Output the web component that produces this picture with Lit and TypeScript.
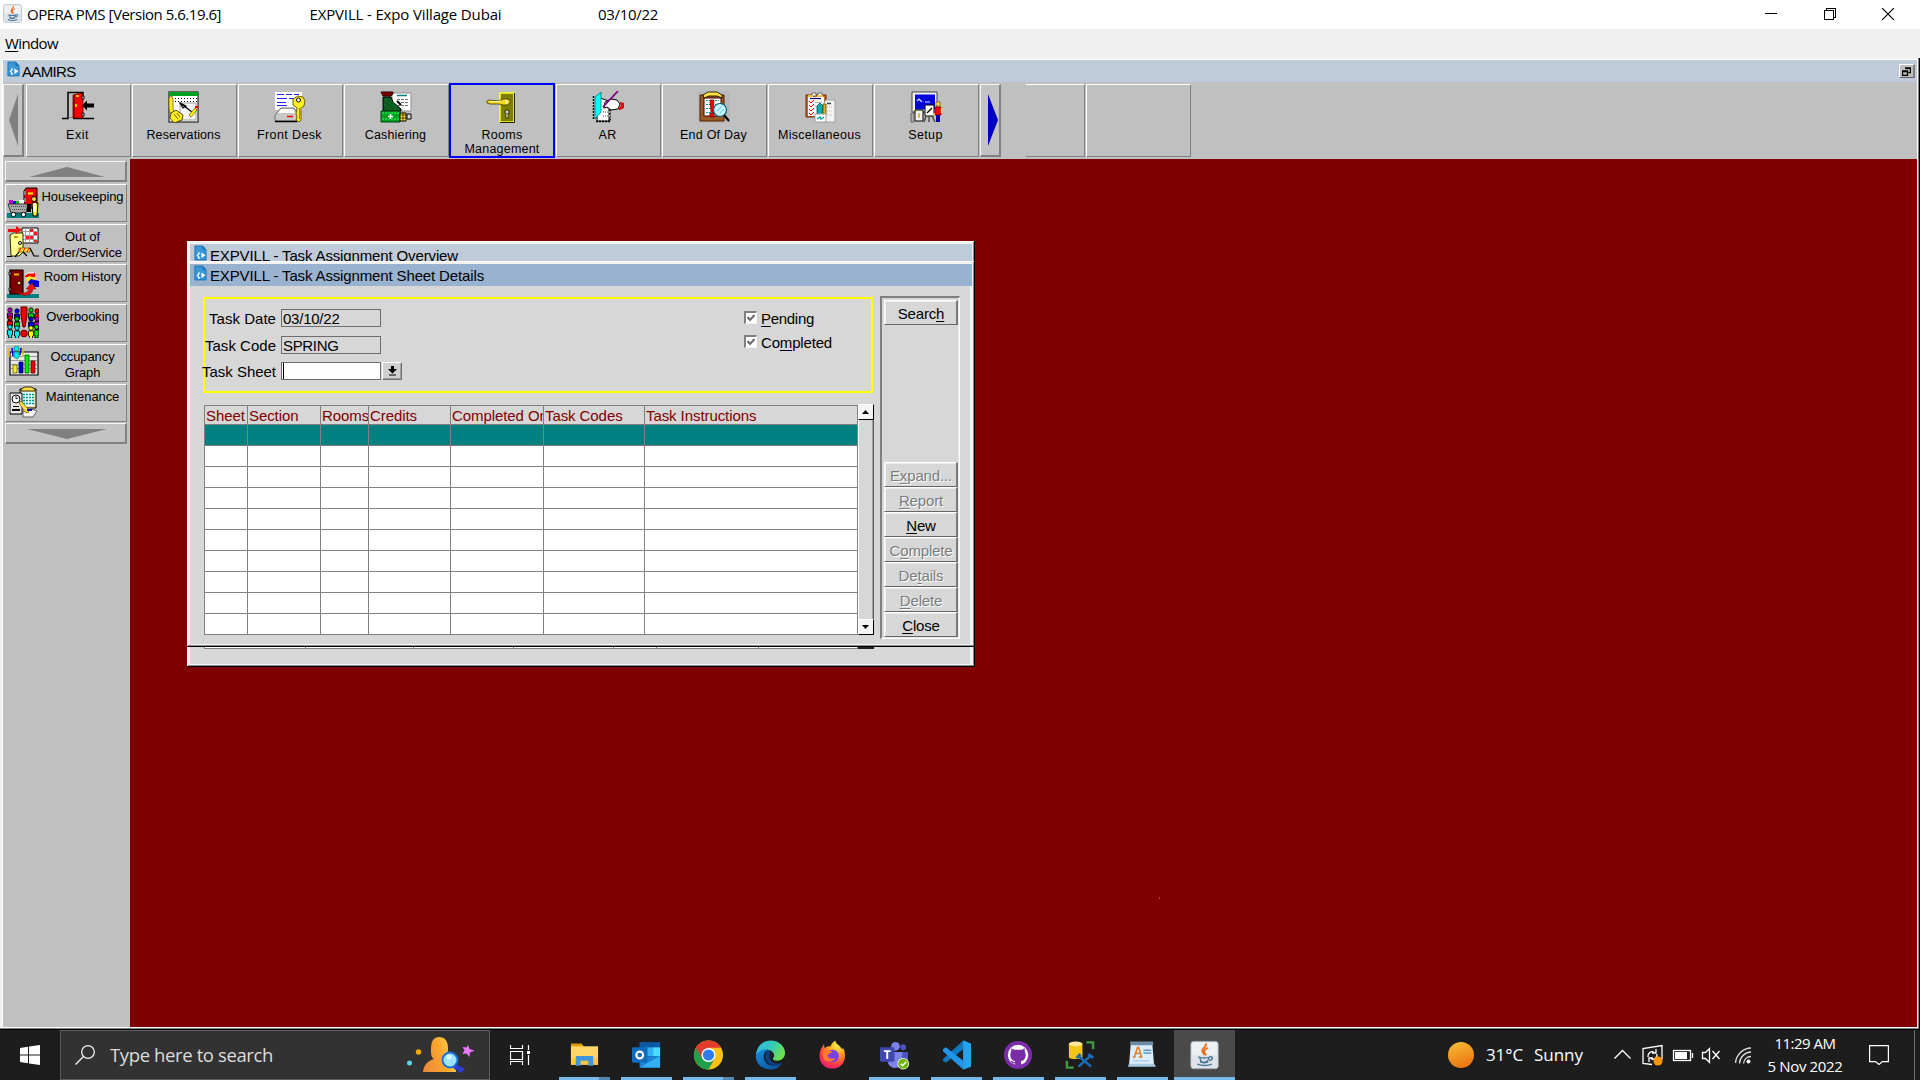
import { LitElement, html, css, svg, nothing } from "lit";
import { customElement, property } from "lit/decorators.js";

/* Spreads its text over a given width by adjusting the tracking. */
@customElement("fit-text")
class FitText extends LitElement {
  @property({ type: Number }) w = 0;
  static styles = css`
    :host { display: inline-block; white-space: nowrap; }
  `;
  render() {
    return html`<slot></slot>`;
  }
  firstUpdated() {
    const n = (this.textContent ?? "").trim().length;
    const now = this.getBoundingClientRect().width;
    if (this.w && n > 1) this.style.letterSpacing = `${(this.w - now) / n}px`;
  }
}

const icon = (w: number, h: number, body: unknown, crisp = false, vb = `0 0 ${w} ${h}`) => html`
  <svg width=${w} height=${h} viewBox=${vb} shape-rendering=${crisp ? "crispEdges" : "auto"} fill="none">${body}</svg>`;

const javaArt = svg`
  <rect x="1" y="1" width="30" height="30" rx="3" fill="#eef1f4" stroke="#9aa7b3"/>
  <rect x="2" y="16" width="28" height="14" fill="#dde3e8"/>
  <path d="M17 3c3 4-6 6-3 10l2 3M20 8c-5 2-6 5-2 8" stroke="#e76f1c" stroke-width="2"/>
  <path d="M9 18c4 1.500 10 1.500 13 0M11 18c0 4 1 6 4 6s6-2 6-6M22 18c4-1 3 4-1 4M8 26c5 2 12 2 16 0M11 23.500c3 1 7 1 9 0" stroke="#4d7896" stroke-width="1.700"/>`;

const docArt = svg`
  <path d="M1 1h8l4 4v11H1z" fill="#3c97d6" stroke="#1873b0"/>
  <path d="M9 0v5h4z" fill="#1873b0"/>
  <path d="M8 8l4.500 3L8 14z" fill="#fff"/>
  <path d="M6.500 8.500H5v1.500l-1.500 1L5 12.500v1.500h1.500" stroke="#fff" stroke-width="1.200"/>`;

const art: Record<string, unknown> = {
  exit: svg`
    <path d="M0 27.500h6V1.500h15V5M11 27.500h21" stroke="#000" stroke-width="1.500"/>
    <path d="M6 27h6v-2z" fill="#808080"/>
    <path d="M11 4l8-2 2 2v23H11z" fill="#f00" stroke="#600000" stroke-width=".8"/>
    <path d="M12 27V4" stroke="#800000" stroke-width="1.500"/>
    <path d="M14 5h3M13 14h1v2" stroke="#ff0" stroke-width="1.500"/>
    <path d="M20 5h2v3h-2zM20 22h2v3h-2z" fill="#fff" stroke="#000"/>
    <path d="M20 14.500l5-5v3h7v4h-7v3z" fill="#000"/>`,
  reservations: svg`
    <rect x="1" y="1" width="29" height="30" fill="#fff" stroke="#000"/>
    <rect x="1" y="1" width="29" height="4" fill="#00a020"/>
    <path d="M4 7.500h26M4 10.500h26" stroke="#000" stroke-width="1" stroke-dasharray="1 2"/>
    <path d="M12 12h16v17H12z" fill="#f4f4f4" stroke="#a0a0a0"/>
    <path d="M12 12l12 9M12 12l3 5 3-2z" stroke="#000" stroke-width="1.200"/>
    <path d="M21 24l6-7 2 2-6 7z" fill="#ff0" stroke="#806000" stroke-width=".8"/>
    <path d="M27 15h3v2h-3z" fill="#f00"/>
    <path d="M1 7l3-2 1 4v9l1 3-4 1-1-5z" fill="#ffee20" stroke="#806000" stroke-width=".8"/>
    <path d="M3 22l5-3 7 5-1 5-8 3-4-5z" fill="#ffee20" stroke="#302000" stroke-width=".8"/>
    <path d="M6 23l4 5M9 22l3 4" stroke="#806000"/>`,
  frontdesk: svg`
    <path d="M1 1h27v18H1z" fill="#fff"/>
    <path d="M3 3.500h7M12 3.500h6M20 3.500h5M3 7.500h10M15 7.500h5M3 11.500h9M3 14.500h10" stroke="#2020ff" stroke-width="1.200"/>
    <path d="M7 17h13l4 6v7H1v-6z" fill="#c8c8c8" stroke="#707070"/>
    <path d="M7 18h12l2 4H4z" fill="#fff"/>
    <path d="M1 30.500h22" stroke="#000" stroke-width="1.500"/>
    <path d="M13 25.500h6" stroke="#f00" stroke-width="1.500"/>
    <path d="M24 5l5 1 2 4-1 5-3 2v12l-2 2-3-2 1-3-1-3 1-6-4-3v-6z" fill="#ffee20" stroke="#706000"/>
    <circle cx="24.500" cy="9" r="2" fill="#fff" stroke="#000"/>
    <path d="M25.500 17v11" stroke="#a08000"/>`,
  cashiering: svg`
    <path d="M12 2h19v18H12z" fill="#fff" stroke="#909090"/>
    <path d="M17 4.500h10" stroke="#008080" stroke-width="1.500"/>
    <path d="M17 8.500h12M17 11.500h12M17 14.500h12" stroke="#777" stroke-dasharray="3 1"/>
    <path d="M1 1h12v2l-2 2H3z" fill="#800000" stroke="#300000"/>
    <path d="M3 6h8l2 5 8 7v2H3z" fill="#0a5a20" stroke="#000"/>
    <path d="M5 8l12 11M10 8l10 11M4 13l7 6" stroke="#2b8a3e" stroke-dasharray="1 1"/>
    <path d="M17 10l4 4" stroke="#000" stroke-width="2"/>
    <path d="M1 20h19v11H1z" fill="#00a020" stroke="#004010"/>
    <path d="M2 22h17M2 28h17" stroke="#30ff60" stroke-dasharray="2 1"/>
    <path d="M10.500 23v5M8 25.500h5" stroke="#fff" stroke-width="1.500"/>
    <path d="M20 22h6v8h-6z" fill="#ffee40" stroke="#000"/><path d="M27 23h4v5h-4z" fill="#d8d8d8" stroke="#000"/>
    <path d="M19 24h8M19 27h8M23 21v10" stroke="#504000"/>`,
  rooms: svg`
    <path d="M14 2h14v29H14z" fill="#808000" stroke="#ffff20" stroke-width="1.500"/>
    <path d="M28.500 2v29.500H14" stroke="#202000" stroke-width="1"/>
    <path d="M1 10l2-1 10 1 4-2h4l3 1v3l-3 2h-4l-4-1H4l-3-1z" fill="#f4d820" stroke="#403800" stroke-width=".8"/>
    <path d="M4 10.500h11" stroke="#fff9a0"/>
    <path d="M19 9l2 1-1 3" stroke="#fff" stroke-width="1"/>
    <circle cx="21" cy="21" r="2.200" fill="#d0d0d0" stroke="#202000"/>
    <path d="M20 23v4h2v-4" fill="#fff" stroke="#202000" stroke-width=".8"/>`,
  ar: svg`
    <path d="M5 6l12 4v20H5z" fill="#fff" stroke="#000"/>
    <path d="M1.500 5v24M4 30.500h14V17" stroke="#000" stroke-width="1.500" stroke-dasharray="2 1"/>
    <path d="M3 6l6-5v20l-6 7z" fill="#00ffff" stroke="#007070" stroke-width=".8"/>
    <path d="M11 17h7M11 21h7M11 25h7" stroke="#b0b0b0" stroke-dasharray="1 1" stroke-width="2"/>
    <path d="M13 11l6-3 6 1 3 4-2 5-7 1-4-3-3 1z" fill="#fff" stroke="#000"/>
    <path d="M28 11l4 1v5l-4 2-2-1 3-3z" fill="#e00000"/>
    <path d="M11 16L26 0" stroke="#800080" stroke-width="1.800"/>`,
  endofday: svg`
    <rect width="32" height="32" fill="#b8b8b8"/>
    <path d="M2 4h24v26H2z" fill="#9a5a28" stroke="#502000"/>
    <path d="M6 7h17v18H6z" fill="#fff" stroke="#400"/>
    <path d="M8 9.500h13M8 13.500h13M8 17.500h13M8 21.500h13" stroke="#00a0a0" stroke-dasharray="2 1"/>
    <path d="M5 4l5-3h9l5 3v3l-5-2h-8L6 7z" fill="#ffe040" stroke="#000" stroke-width=".8"/>
    <path d="M12 9h4l-1 12h-2zM12 22h4v4h-4z" fill="#f00" stroke="#800000" stroke-width=".8"/>
    <circle cx="22" cy="19" r="6.500" fill="#c8f4ff" stroke="#006080" stroke-width="1.200"/>
    <path d="M19 20l5-5M22 22l4-4" stroke="#40d0ff"/>
    <path d="M26 24l5 6" stroke="#000" stroke-width="2"/>`,
  misc: svg`
    <path d="M2 4h20v22H2z" fill="#c06a38" stroke="#702000"/>
    <path d="M4 6h16v19H4z" fill="#fff"/>
    <path d="M8 2h4v3H8zM14 2h4v3h-4z" fill="#fff" stroke="#505050" stroke-width=".8"/>
    <path d="M4 5h5M13 5h6" stroke="#ffe040" stroke-width="1.500"/>
    <path d="M6 7.500h11" stroke="#0000a0" stroke-width="1.200"/>
    <path d="M5 10l2 2 3-3M5 14l2 2 3-3M5 18l2 2 3-3M5 22l2 2 3-3" stroke="#f00"/>
    <path d="M11 11.500h7M11 15.500h4" stroke="#b0b0b0"/>
    <path d="M22 9h9v22H20V12z" fill="#f4f4f4" stroke="#a0a0a0"/>
    <path d="M23 12.500h4" stroke="#404040" stroke-width="1.500"/>
    <path d="M23 16h6M23 20h6M23 24h6" stroke="#bbb" stroke-dasharray="1 1"/>
    <path d="M13 15l3-3 3 3v9h-6z" fill="#00b0b0" stroke="#005050" stroke-width=".8"/>
    <path d="M19 13h3v11h-3z" fill="#e0b020" stroke="#604000" stroke-width=".8"/>
    <path d="M11 23h11v8H11z" fill="#fff" stroke="#a0a0a0"/>
    <path d="M13 28l3-2 1 2 3-2" stroke="#00a0a0" stroke-width="1.500"/>`,
  setup: svg`
    <path d="M2 1h25v20H2z" fill="#f4f4f4" stroke="#404040"/>
    <path d="M5 3.500h20v15H5z" fill="#0000e0"/>
    <path d="M7 10l2-2 3 3M15 11h5" stroke="#e0e0ff" stroke-width="1.200"/>
    <path d="M5 19h8v11H5z" fill="#f0f0f0" stroke="#000"/>
    <path d="M9 22v5" stroke="#d0b000" stroke-width="1.500"/>
    <path d="M1 22h3v9H1z" fill="#b0b0b0" stroke="#606060"/>
    <path d="M15 14h9v11h-9z" fill="#fff" stroke="#000"/>
    <path d="M17 22l5-5" stroke="#000" stroke-width="1.200"/>
    <path d="M16 25l-2 6M22 25l3 6M19 25v6" stroke="#505050" stroke-width="1.500"/>
    <path d="M26 11h4v4h-4z" fill="#ffe040" stroke="#806000" stroke-width=".8"/>
    <path d="M25 16h6v8h-6z" fill="#f00" stroke="#800000" stroke-width=".8"/>
    <path d="M26 24h4v7h-4z" fill="#0000a0"/>
    <path d="M24 22v3M31.500 17v5" stroke="#ffe040" stroke-width="1.500"/>`,
  housekeeping: svg`
    <path d="M0 27h32v5H0z" fill="#008080"/>
    <path d="M17 5l2-3h11v20H17z" fill="#f00000" stroke="#000"/>
    <path d="M21 7.500h5" stroke="#ff0" stroke-width="2"/>
    <path d="M17 6h1v3M17 13h1v3" stroke="#808080" stroke-width="2"/>
    <path d="M2 14h4v4H2z" fill="#c000c0"/><path d="M6 15h3v3H6z" fill="#00f"/><path d="M9 15h3v3H9z" fill="#0c0"/><path d="M12 14h5v4h-5z" fill="#fff"/>
    <path d="M1 18h20l-2 9H4z" fill="#a8a8a8" stroke="#303030"/>
    <path d="M4 20.500h15M5 23.500h13" stroke="#505050" stroke-dasharray="1 1"/>
    <circle cx="6.500" cy="28.500" r="2.200" fill="#fff" stroke="#000"/><circle cx="16.500" cy="28.500" r="2.200" fill="#fff" stroke="#000"/>
    <path d="M20 18h4v8h-4z" fill="#000"/>
    <circle cx="27" cy="13" r="2.500" fill="#ffe040" stroke="#000"/>
    <path d="M25 17h6l-1 13h-4z" fill="#ffee20" stroke="#000"/>
    <path d="M26.500 17h2.500v9h-2.500z" fill="#fff"/>`,
  outoforder: svg`
    <path d="M15 2h16v15H15z" fill="#fff" stroke="#000"/>
    <path d="M18.500 2v15M22.500 2v15M26.500 2v15M15 5.500h16M15 9.500h16M15 13.500h16" stroke="#a0a0a0"/>
    <path d="M23 3h3v3h-3zM27 6h3v3h-3zM19 10h3v3h-3zM23 10h3v3h-3zM27 14h3v2h-3z" fill="#f02020"/>
    <path d="M3 9l3-2h10v19l-4 4H4z" fill="#ffff90" stroke="#303000"/>
    <path d="M7 11h4" stroke="#c0a000" stroke-width="2"/><circle cx="13" cy="17" r="1.500" fill="#fff" stroke="#000"/>
    <path d="M1 3h8V0l6 4-6 4V6H1z" fill="#e81010"/>
    <path d="M12 22h11v4H12z" fill="#ffee40" stroke="#806000" stroke-width=".8"/>
    <path d="M14 22l-2 4M18 22l-2 4M22 22l-2 4" stroke="#f00"/>
    <path d="M12 26l-4 5M23 22l4 8h5M16 26l4 4M0 30.500h5" stroke="#000" stroke-width="1.200"/>`,
  history: svg`
    <path d="M0 28h32v4H0z" fill="#008080"/>
    <path d="M3 4h13v24H3z" fill="#800000" stroke="#000" stroke-width="1.200"/>
    <path d="M7 8.500h5" stroke="#e0c000" stroke-width="2"/><circle cx="12" cy="17" r="1.800" fill="#ffe040" stroke="#000" stroke-width=".8"/>
    <path d="M2 6h2v3H2zM2 22h2v3H2z" fill="#aaa" stroke="#000" stroke-width=".8"/>
    <path d="M17 10l4-3h7v4H18z" fill="#f00"/><path d="M17.500 10l3.500-3h6" stroke="#fff"/><path d="M19 13l3-3 7 2-1 4h-8z" fill="#ffe820"/><path d="M21 16l3-3 8 2v6h-8z" fill="#0000e0"/>
    <path d="M9 25c5 3 12 3 13-2h-3l6-6 4 6h-3c-1 8-12 8-17 2z" fill="#e01818" stroke="#800000" stroke-width=".5"/>`,
  overbooking: svg`
    ${[["#c000c0", 3, 4], ["#00f", 10, 5], ["#0c0", 24, 4], ["#e00", 30, 5], ["#e00", 3, 12], ["#0c0", 10, 13], ["#00f", 24, 13], ["#c000c0", 30, 13], ["#0ee", 3, 21], ["#0ee", 10, 22], ["#ff0", 24, 22], ["#0d0", 29.500, 21]].map(
      ([c, x, y]) => svg`<circle cx=${x} cy=${y} r="2.200" fill=${c} stroke="#000" stroke-width=".8"/>
        <path d=${`M${+x - 2.500} ${+y + 3}h5v5h-1v3h-3v-3h-1z`} fill=${c} stroke="#000" stroke-width=".8"/>`)}
    <path d="M14 1h6v9l-2 11h-2l-2-11z" fill="#e80000" stroke="#600000"/>
    <circle cx="17" cy="27.500" r="3.400" fill="#e80000" stroke="#600000"/>`,
  occupancy: svg`
    <path d="M3 6h28v23H3z" fill="#e8e8e8" stroke="#000" stroke-width="1.200"/>
    <path d="M4 10.500h26M4 14.500h26M4 18.500h26M4 22.500h26" stroke="#999"/>
    <path d="M6 19h4v8H6z" fill="#ffee20" stroke="#606000" stroke-width=".8"/><path d="M12 16h4v11h-4z" fill="#00c" stroke="#000060" stroke-width=".8"/>
    <path d="M18 9h4v18h-4z" fill="#0e0" stroke="#006000" stroke-width=".8"/><path d="M24 15h4v12h-4z" fill="#e00" stroke="#600000" stroke-width=".8"/>
    <path d="M2 2v9M16 2v9" stroke="#e0c000" stroke-width="1.500"/>
    <path d="M5 2l1 8M14 2l-1 7" stroke="#00c" stroke-width="1.500"/>
    <circle cx="9.500" cy="2.500" r="2.500" fill="#0ee" stroke="#007070" stroke-width=".7"/><path d="M7 6h5v5l-2 2-3-2z" fill="#0ee" stroke="#007070" stroke-width=".7"/>`,
  maintenance: svg`
    <path d="M13 3h16v19H13z" fill="#f0e0a0" stroke="#000"/>
    <path d="M15 6h12v14H15z" fill="#e8ffff"/>
    <path d="M16 8.500h11M16 11.500h11M16 14.500h11M16 17.500h11" stroke="#009090" stroke-dasharray="2 1" stroke-width="1.500"/>
    <path d="M14 3l4-2h6l4 2v2H14z" fill="#ffe040" stroke="#000" stroke-width=".8"/>
    <path d="M3 7h12v21H3z" fill="#e8e8e8" stroke="#000"/>
    <path d="M1.500 8h1.500v19H1.500z" fill="#909090"/>
    <circle cx="9" cy="13" r="4" fill="#fff" stroke="#000"/><path d="M9 10v3l2-1" stroke="#303030"/>
    <path d="M6 20.500h6" stroke="#000"/><path d="M5 24h8" stroke="#000" stroke-width="2"/>
    <path d="M16 26l6-4 8 3-4 6H16z" fill="#f4f4f4" stroke="#606060"/>
    <path d="M14 15l8 9-1 3-3-1-6-9z" fill="#ffe040" stroke="#806000" stroke-width=".8"/>
    <path d="M20 24h5" stroke="#0000d0" stroke-width="2"/>`,
};

const apps: { id: string; line?: boolean; active?: boolean; multi?: boolean; art: unknown }[] = [
  { id: "explorer", line: true, multi: true, art: svg`
      <path d="M2 3h11l3 4H2z" fill="#d99a0b"/><path d="M2 6h28v19H2z" fill="#ffd667"/><path d="M2 18h28v7H2z" fill="#fbc83f"/>
      <path d="M7 16h18v10h-5v-5h-8v5H7z" fill="#4296da"/>` },
  { id: "outlook", line: true, art: svg`
      <path d="M9 2h21v26H9z" fill="#1066b5"/><path d="M16 7h14v9H16z" fill="#32b1ee"/><path d="M23 7h7v9h-7z" fill="#50d9ff"/><path d="M9 2h21v5H9z" fill="#0c59a4"/>
      <path d="M9 17l21-1v12H9z" fill="#1b84d9"/><path d="M9 28l21-12v12z" fill="#35b0f0"/>
      <rect x="1" y="7" width="16" height="16" rx="1.500" fill="#0f6cbd"/><circle cx="9" cy="15" r="3.500" stroke="#fff" stroke-width="2.200"/>` },
  { id: "chrome", line: true, multi: true, art: svg`
      <circle cx="16" cy="15" r="15" fill="#fbc116"/>
      <path d="M3 7.500A15 15 0 0 0 16 30l6.500-11.300-6.500-3.700z" fill="#239e4b"/>
      <path d="M3 7.500A15 15 0 0 1 29 7.500H16v7.500l-6.500 3.700z" fill="#e33b2e"/>
      <circle cx="16" cy="15" r="7.300" fill="#fff"/><circle cx="16" cy="15" r="5.800" fill="#2f7de9"/>` },
  { id: "edge", line: true, art: svg`
      <defs><linearGradient id="eg" x1="0" y1="0" x2="1" y2=".4"><stop stop-color="#2fb6e8"/><stop offset=".6" stop-color="#35c9b5"/><stop offset="1" stop-color="#6ae04e"/></linearGradient>
      <linearGradient id="eb" x1="0" y1="0" x2="1" y2="1"><stop stop-color="#1490df"/><stop offset="1" stop-color="#0c4a96"/></linearGradient></defs>
      <path d="M1 15C2 5 9 0 16 0c9 0 15 6 15 13 0 5-4 8-8 8-3 0-5-1-4.500-2.500 3-3 .5-8.500-5-8.500C8 10 3 12 1 15z" fill="url(#eg)"/>
      <path d="M1 15c2-4 7-6 12-6-4 3-5 8-3 12 3 6 12 7 18 2-3 5-7 7-12 7C7 30 0 23 1 15z" fill="url(#eb)"/>
      <path d="M13 9c-5 6-2 17 8 17 3 0 5-1 7-3-6 2-12 0-13-5-.5-2 0-4 1-5z" fill="#0b3f86"/>` },
  { id: "firefox", art: svg`
      <defs><radialGradient id="ff" cx=".7" cy=".15" r=".95"><stop stop-color="#fff24a"/><stop offset=".4" stop-color="#ff9a1f"/><stop offset=".75" stop-color="#ff3b47"/><stop offset="1" stop-color="#e01a80"/></radialGradient></defs>
      <path d="M4 9l3-5 1 4c2-2 4-2 6-2 1-3 3-5 5-6 0 4 5 5 7 9 1-1 1-2 0-3 6 9 3 23-10 23C5 29 0 19 4 9z" fill="url(#ff)"/>
      <circle cx="16" cy="16" r="6.500" fill="#7a3ff0"/><path d="M6 11c4-2 6 0 10 0-2 3-5 2-5 5 1 3 5 3 8 2-2 5-11 5-13-1z" fill="#ff7a2a"/>` },
  { id: "teams", line: true, art: svg`
      <circle cx="25" cy="7" r="3" fill="#4b53bc"/><circle cx="17" cy="6" r="4.500" fill="#7b83eb"/>
      <path d="M20 12h10v8a5 5 0 0 1-8 4z" fill="#4b53bc"/><path d="M9 12h15v9a7.500 7.500 0 0 1-15 0z" fill="#7b83eb"/>
      <rect x="1" y="7" width="15" height="15" rx="1.500" fill="#4048b0"/><path d="M5 11h7M8.500 11v8" stroke="#fff" stroke-width="2"/>
      <circle cx="25" cy="24" r="6" fill="#fff"/><circle cx="25" cy="24" r="5.200" fill="#6bb700"/><path d="M22.500 24l2 2 3.500-4" stroke="#fff" stroke-width="1.600"/>` },
  { id: "code", line: true, art: svg`
      <path d="M23 0l8 3v24l-8 3z" fill="#24a5f1"/><path d="M23 0v9L5 23l-3-2v-2z" fill="#0f77bd"/><path d="M23 30v-9L5 7 2 9v2z" fill="#2196e8"/><path d="M23 0l3 1v28l-3 1z" fill="#2b9ee6"/>` },
  { id: "github", line: true, art: svg`
      <circle cx="15.500" cy="15" r="14.500" fill="#7a2da6"/><circle cx="15.500" cy="15" r="10.500" fill="#fff"/>
      <path d="M12.500 25.500v-4c-4-1-5-4-5-7 0-1 .5-2 1-3V8l3 1.500h8l3-1.500v3.500c.5 1 1 2 1 3 0 3-1 6-5 7v4z" fill="#7a2da6"/><path d="M12.500 23c-2 .5-3 0-4-2" stroke="#7a2da6" stroke-width="1.500"/>` },
  { id: "sqldev", line: true, art: svg`
      <path d="M4 3v14c0 3 14 3 14 0V3z" fill="#f5c518"/><ellipse cx="11" cy="3.500" rx="7" ry="2.500" fill="#ffe9a0"/>
      <path d="M22 2h7v7M2 21v7h7" stroke="#3f9b3f" stroke-width="2.500"/>
      <path d="M14 16l13 11M26 16L14 27" stroke="#1c6bb5" stroke-width="2.600"/><path d="M12 18l4-4M24 14l5 4" stroke="#1c6bb5" stroke-width="3"/>` },
  { id: "wordpad", line: true, art: svg`
      <path d="M4 2h22l2 24H2z" fill="#dceefb"/><path d="M3 1h24v4H4z" fill="#6d8ba5"/><path d="M2 24h26l2 3H1z" fill="#a9cbe6"/>
      <path d="M6 17h3M12 17h4M7.500 17l3.500-10h1l3 10M9 13.500h5" stroke="#e0832c" stroke-width="1.600"/><path d="M17 10h8M17 13h8" stroke="#5b96d2" stroke-width="1.500"/><path d="M6 21h17" stroke="#9fc2e0"/>` },
  { id: "java", line: true, active: true, art: svg`<g transform="translate(1 0) scale(.94)">${javaArt}</g>` },
];

const tools = [
  ["exit", "Exit", 23], ["reservations", "Reservations", 74], ["frontdesk", "Front Desk", 65], ["cashiering", "Cashiering", 61.500],
  ["rooms", "Rooms Management", 0], ["ar", "AR", 18], ["endofday", "End Of Day", 67], ["misc", "Miscellaneous", 83], ["setup", "Setup", 34.500],
] as const;

const side = [
  ["housekeeping", ["Housekeeping"]], ["outoforder", ["Out of", "Order/Service"]], ["history", ["Room History"]],
  ["overbooking", ["Overbooking"]], ["occupancy", ["Occupancy", "Graph"]], ["maintenance", ["Maintenance"]],
] as const;

const columns = ["Sheet", "Section", "Rooms", "Credits", "Completed On", "Task Codes", "Task Instructions"];

const actions = [
  ["E", "x", "pand...", true], ["", "R", "eport", true], ["", "N", "ew", false], ["C", "o", "mplete", true],
  ["De", "t", "ails", true], ["", "D", "elete", true], ["", "C", "lose", false],
] as const;

@customElement("app-root")
class AppRoot extends LitElement {
  static styles = css`
    :host { display: flex; flex-direction: column; width: 1920px; height: 1080px; overflow: hidden; background: #c0c0c0; color: #000;
      font: 15px/18px "Liberation Sans", Arial, sans-serif; }
    * { box-sizing: border-box; }
    svg { display: block; flex: none; }
    u { text-decoration: underline; text-underline-offset: 2px; text-decoration-thickness: 1px; }
    .ui { font-family: "Open Sans", "Noto Sans", sans-serif; }

    .titlebar { display: flex; align-items: center; height: 29px; background: #fff; padding: 0 0 2px 3px; flex: none; }
    .titlebar .name { margin-left: 5px; }
    .titlebar .hotel { margin-left: 88.5px; }
    .titlebar .date { margin-left: 96.5px; }
    .controls { display: flex; align-items: center; margin-left: auto; gap: 46.5px; padding-right: 26px; }
    .menubar { height: 29px; background: #f0f0f0; padding: 4px 0 0 5px; flex: none; line-height: 21px; }

    .mdi { height: 972px; flex: none; display: flex; flex-direction: column; padding: 2px 1px 1px 3px; background: #fff;
      border-right: 1px solid #000; border-bottom: 1px solid #000; box-shadow: inset -1px -1px #808080, inset 2px 1px #f0f0f0; }
    .caption { display: flex; align-items: flex-start; flex: none; height: 22px; background: #bfcbd9; }
    .mdi > .caption { margin-right: 1px; padding: 1px 2px 0 4px; }
    .mdi > .caption fit-text { margin: 2px 0 0 2px; }
    .restore { margin: 3px 0 0 auto; width: 16px; height: 14px; background: #c0c0c0; display: grid; place-items: center;
      border: 1px solid #fff; border-right: 2px solid #808080; border-bottom: 1px solid #606060; }

    .toolbar { flex: none; height: 77px; display: flex; gap: 1px; padding-top: 2px; background: #c0c0c0; margin-right: 1px; }
    .tool, .sidebtn { background: #c0c0c0; border: 1px solid #fff; border-right-color: #808080; border-bottom-color: #808080; }
    .tool { width: 105px; height: 73px; display: flex; flex-direction: column; align-items: center; padding: 6px 2px 0 0; gap: 5px;
      font-size: 12.5px; line-height: 14px; text-align: center; overflow: hidden; }
    .tool.on { border: 2px solid #00f; margin: -1px 0 0 -1px; width: 106px; height: 75px; padding: 6px 0 0 0; }
    .tool.on fit-text { display: block; }
    .tool.cut { width: 59px; margin-left: 24px; border-left: 0; }
    .arrow { background: #c3c3c3; border: 1px solid #f4f4f4; border-right: 2px solid #808080; border-bottom: 2px solid #808080; display: grid; place-items: center; }
    .toolbar .arrow { width: 21px; height: 73px; }
    .toolbar .prev { margin-right: 1px; }
    .toolbar .next svg { margin-left: 3px; }

    .work { flex: none; height: 868px; display: flex; margin-right: 1px; }
    .sidebar { width: 127px; background: #c0c0c0; padding: 2px 3px 0 2px; display: flex; flex-direction: column; gap: 2px; }
    .sidebar .arrow { height: 21px; padding-top: 2px; }
    .sidebar .arrow svg { margin-left: 3px; }
    .sidebar .last { margin-top: -1px; }
    .sidebtn { height: 38px; display: flex; align-items: flex-start; padding: 1px 0 0 1px; font-size: 13px; line-height: 16px; flex: none; overflow: visible; }
    .sidebtn div { flex: 1; text-align: center; padding: 3px 0 0 0; letter-spacing: -0.1px; white-space: nowrap; }

    .canvas { flex: 1; background: #800000; position: relative; }
    .speck { position: absolute; left: 1029px; top: 738px; width: 1px; height: 2px; background: #b04848; }
    .win { position: absolute; left: 57px; width: 788px; background: #f3f3f3; padding: 3px 2px 2px 3px; display: flex; flex-direction: column;
      border-right: 1px solid #000; border-bottom: 1px solid #000; box-shadow: inset 1px 1px #fff, inset -1px -1px #8a8a8a; }
    .win .caption { padding-left: 4px; background: #bfcbd9; }
    .win .caption svg { margin-top: 1px; }
    .win .caption fit-text { margin: 3px 0 0 3px; }
    .overview { top: 82px; height: 426px; }
    .overview .body { align-items: flex-end; padding: 0 0 15px 14px; gap: 0; }
    .remnant { display: grid; grid-template-columns: 101px 108px 100px 100px 43px 102px 1fr; width: 654px; height: 6px; background: #fff;
      border: 1px solid #808080; }
    .remnant i { border-right: 1px solid #808080; }
    .foot { width: 16px; height: 6px; background: #202020; }
    .foot2 { width: 79px; height: 4px; margin: 0 0 3px 6px; border-bottom: 1px solid #fff; }
    .details { top: 102px; height: 386px; }
    .details .caption { background: #99b2d0; }
    .body { flex: 1; display: flex; background: #d7d7d7; margin-right: 2px; padding: 10px 0 0 13px; gap: 7px; }
    .main { width: 670px; display: flex; flex-direction: column; padding-top: 1px; }
    .group { height: 96px; border: 2px solid #ff0; display: flex; padding-top: 10px; flex: none; }
    .fields { display: grid; grid-template-columns: 71px 100px 20px; grid-template-rows: 18px 18px 18px; row-gap: 9px; width: 197px; }
    .fields .r3 { margin-top: -1px; }
    .fields label { display: flex; justify-content: flex-end; line-height: 20px; }
    .box { margin-left: 5px; width: 100px; height: 18px; border: 1px solid #6e6e6e; padding-left: 1px; line-height: 18px; }
    .box.edit { background: #fff; padding: 0 0 0 1px; }
    .caret { display: block; width: 1px; height: 16px; background: #000; }
    .lov { margin-left: 6px; width: 20px; height: 18px; background: #d0d0d0; border: 1px solid #fff; border-right: 1px solid #707070; border-bottom: 1px solid #707070;
      box-shadow: inset -1px -1px #a0a0a0; display: grid; place-items: center; }
    .checks { margin-left: 342px; padding-top: 2px; display: flex; flex-direction: column; gap: 11px; }
    .check { display: flex; height: 13px; gap: 4px; line-height: 15px; align-items: flex-start; }
    .tick { width: 13px; height: 13px; background: #fff; border: 2px solid #808080; border-right: 1px solid #f4f4f4; border-bottom: 1px solid #f4f4f4; }
    .gridwrap { margin-top: 11px; display: flex; height: 231px; padding-left: 1px; }
    .grid { margin-top: 1px; width: 654px; height: 230px; border: 1px solid #808080; display: grid; background: #fff; flex: none;
      grid-template-columns: 43px 73px 48px 82px 93px 101px 1fr; grid-template-rows: 19px repeat(9, 21px) 20px; }
    .cell { border-right: 1px solid #808080; border-bottom: 1px solid #808080; }
    .cell:nth-child(7n) { border-right: 0; }
    .cell:nth-child(n + 71) { border-bottom: 0; }
    .head { background: #d7d7d7; color: #800000; padding-left: 1px; overflow: hidden; white-space: nowrap; line-height: 20px; letter-spacing: -0.08px; }
    .sel { background: #008080; }
    .vscroll { width: 16px; height: 231px; display: flex; flex-direction: column; justify-content: space-between; background: #d7d7d7;
      border-left: 1px solid #fff; box-shadow: inset -1px 0 #606060, inset -2px 0 #a0a0a0; flex: none; }
    .vbtn { height: 16px; background: #f4f4f4; border: 1px solid #fff; border-right: 1px solid #000; border-bottom: 1px solid #000; display: grid; place-items: center; margin-left: -1px; padding-right: 1px; }
    .panel { width: 80px; height: 343px; border: 2px solid #808080; border-right: 1px solid #fff; border-bottom: 1px solid #fff; box-shadow: inset -1px -1px #e8e8e8;
      padding: 2px 1px 1px 2px; display: flex; flex-direction: column; justify-content: space-between; flex: none; }
    .btn { width: 74px; height: 25px; border: 1px solid #fff; border-right: 2px solid #7a7a7a; border-bottom: 1px solid #666; background: #d7d7d7;
      box-shadow: inset 1px 1px #ececec; text-align: center; line-height: 23px; letter-spacing: -0.15px; padding: 1px 0 0 1px; white-space: nowrap; }
    .btn.off { color: #7c7c7c; text-shadow: 1px 1px #fff; }

    .taskbar { flex: none; height: 50px; background: #1d1d1d; display: flex; color: #fff; }
    .start { width: 60px; display: grid; place-items: center; padding-right: 1px; }
    .search { width: 430px; height: 50px; background: #323232; border: 1px solid #5c5c5c; display: flex; align-items: center; padding-left: 14px; color: #dcdcdc; }
    .search fit-text { font-size: 18.5px; margin: 0 134px 0 15px; line-height: 24px; }
    .view { width: 64px; display: grid; place-items: center; padding-right: 4px; }
    .apps { display: flex; gap: 1px; }
    .app { width: 61px; height: 50px; display: flex; flex-direction: column; align-items: center; justify-content: space-between; padding-top: 10px; }
    .app > svg { margin-left: -1px; }
    .app.on { background: #4a4a4a; }
    .line { width: 51px; height: 3px; background: #76b9ed; }
    .line.multi { background: linear-gradient(90deg, #76b9ed 40px, #5588b0 40px); }
    .app.on .line { width: 61px; }
    .tray { margin-left: auto; display: flex; align-items: center; font-size: 17px; }
    .tray svg { margin-left: 31px; }
    .tray .cond { margin-left: 11px; }
    .sun { width: 26px; height: 26px; border-radius: 50%; background: linear-gradient(160deg, #f7c036, #ec6a0c); margin-right: 12px; }
    .clock { display: flex; flex-direction: column; align-items: center; width: 80px; margin: 0 24px 1px 13px; font-size: 15px; line-height: 23px; }
    .tray .note svg { margin-left: 0; }
    .peek { width: 1px; height: 50px; background: #6a6a6a; margin: 0 5px 0 25px; }
  `;

  private tri(points: string, color: string, w: number, h: number) {
    return icon(w, h, svg`<polygon points=${points} fill=${color}/>`);
  }

  render() {
    return html`
      <header class="titlebar ui">
        ${icon(19, 19, javaArt, false, "0 0 32 32")}
        <fit-text class="name" w="194">OPERA PMS [Version 5.6.19.6]</fit-text>
        <fit-text class="hotel" w="192">EXPVILL - Expo Village Dubai</fit-text>
        <fit-text class="date" w="60">03/10/22</fit-text>
        <div class="controls">
          ${icon(12, 12, svg`<path d="M0 5.500h12" stroke="#000"/>`, true)}
          ${icon(12, 12, svg`<path d="M.5 2.500h9v9h-9zM2.500 2.500v-2h9v9h-2" stroke="#000"/>`, true)}
          ${icon(12, 12, svg`<path d="M0 0l12 12M12 0L0 12" stroke="#000" stroke-width="1.200"/>`)}
        </div>
      </header>
      <nav class="menubar ui"><fit-text w="53"><u>W</u>indow</fit-text></nav>

      <section class="mdi">
        <div class="caption">
          ${icon(13, 16, docArt, false, "0 0 14 17")}
          <fit-text w="53.500">AAMIRS</fit-text>
          <span class="restore">${icon(9, 9, svg`<path d="M3.500 1.500h5v4h-2M3 1h6M.5 4.500h5v4h-5zM0 4h6" stroke="#000" stroke-width="1.300"/>`)}</span>
        </div>
        <div class="toolbar">
          <span class="arrow prev">${this.tri("14,0 14,52 5,26", "#808080", 18, 52)}</span>
          ${tools.map(([id, text, w]) => html`
            <div class="tool ${id === "rooms" ? "on" : ""}">
              ${icon(32, 32, art[id])}
              ${w ? html`<fit-text w=${w}>${text}</fit-text>` : html`<div><fit-text w="41">Rooms</fit-text><fit-text w="75">Management</fit-text></div>`}
            </div>`)}
          <span class="arrow next">${this.tri("4,0 4,52 14,26", "#0000c0", 18, 52)}</span>
          <div class="tool cut"></div>
          <div class="tool"></div>
        </div>
        <div class="work">
          <aside class="sidebar">
            <span class="arrow">${this.tri("0,10 38,0 76,10", "#808080", 76, 10)}</span>
            ${side.map(([id, lines]) => html`
              <div class="sidebtn">${icon(32, 32, art[id])}<div>${lines.map((l, i) => html`${i ? html`<br />` : nothing}${l}`)}</div></div>`)}
            <span class="arrow last">${this.tri("0,0 80,0 40,10", "#808080", 80, 10)}</span>
          </aside>
          <main class="canvas">
            <i class="speck"></i>
            <section class="win overview">
              <div class="caption">${icon(13, 16, docArt, false, "0 0 14 17")}<fit-text w="248">EXPVILL - Task Assignment Overview</fit-text></div>
              <div class="body"><div class="remnant"><i></i><i></i><i></i><i></i><i></i><i></i></div><i class="foot"></i><i class="foot2"></i></div>
            </section>
            <section class="win details">
              <div class="caption">${icon(13, 16, docArt, false, "0 0 14 17")}<fit-text w="274">EXPVILL - Task Assignment Sheet Details</fit-text></div>
              <div class="body">
                <div class="main">
                  <div class="group">
                    <div class="fields">
                      <label><fit-text w="67">Task Date</fit-text></label><span class="box"><fit-text w="56.500">03/10/22</fit-text></span><span></span>
                      <label><fit-text w="71">Task Code</fit-text></label><span class="box"><fit-text w="55.500">SPRING</fit-text></span><span></span>
                      <label class="r3"><fit-text w="74">Task Sheet</fit-text></label><span class="box edit r3"><i class="caret"></i></span>
                      <span class="lov r3">${icon(9, 10, svg`<path d="M3 0h3v3h3L4.500 7.500 0 3h3zM1 8.500h7v1H1z" fill="#000"/>`)}</span>
                    </div>
                    <div class="checks">
                      <div class="check"><span class="tick">${icon(10, 10, svg`<path d="M1.500 4l2.500 3L8.500 2" stroke="#6a6a6a" stroke-width="2"/>`)}</span><fit-text w="53"><u>P</u>ending</fit-text></div>
                      <div class="check"><span class="tick">${icon(10, 10, svg`<path d="M1.500 4l2.500 3L8.500 2" stroke="#6a6a6a" stroke-width="2"/>`)}</span><fit-text w="71">Co<u>m</u>pleted</fit-text></div>
                    </div>
                  </div>
                  <div class="gridwrap">
                    <div class="grid">
                      ${columns.map((c) => html`<div class="cell head">${c}</div>`)}
                      ${Array.from({ length: 70 }, (_, i) => html`<div class="cell ${i < 7 ? "sel" : ""}"></div>`)}
                    </div>
                    <div class="vscroll">
                      <span class="vbtn">${this.tri("0,4 3.500,0 7,4", "#000", 7, 4)}</span>
                      <span class="vbtn">${this.tri("0,0 7,0 3.500,4", "#000", 7, 4)}</span>
                    </div>
                  </div>
                </div>
                <div class="panel">
                  <div class="btn">Searc<u>h</u></div>
                  <div>${actions.map(([a, k, b, off]) => html`<div class="btn ${off ? "off" : ""}">${a}<u>${k}</u>${b}</div>`)}</div>
                </div>
              </div>
            </section>
          </main>
        </div>
      </section>

      <footer class="taskbar ui">
        <div class="start">${icon(20, 20, svg`<path d="M0 3l8-1.200V9.500H0zM9 1.600L20 0v9.500H9zM0 10.500h8v7.700L0 17zM9 10.500h11V20L9 18.400z" fill="#fff"/>`)}</div>
        <div class="search">
          ${icon(20, 20, svg`<circle cx="13" cy="7" r="6.300" stroke="#eee" stroke-width="1.300"/><path d="M8.500 11.500L.5 19.500" stroke="#eee" stroke-width="1.400"/>`)}
          <fit-text w="163">Type here to search</fit-text>
          ${icon(68, 36, svg`
            <defs><linearGradient id="pg" x1="0" y1=".6" x2="1" y2=".3"><stop stop-color="#ee8a3c"/><stop offset=".5" stop-color="#f8a52c"/><stop offset="1" stop-color="#fddc4c"/></linearGradient></defs>
            <circle cx="2.500" cy="26" r="2.500" fill="#5fd3e8"/><circle cx="11.500" cy="15" r="2.700" fill="#f7a800"/>
            <path d="M16 35c1-8 5-11 11-13-3-2-3-5-3-9C24 5 26 0 32 0s9 4 9 12c0 5-1 8-3 10 6 2 11 5 11 13z" fill="url(#pg)"/>
            <path d="M49 27l9 5-4 4-8-5z" fill="#2d3fd0"/>
            <circle cx="43" cy="23" r="7.500" fill="#9be3f5" stroke="#1b6fd8" stroke-width="2"/><circle cx="42" cy="20" r="2.500" fill="#d8f6ff"/>
            <path d="M61 8l1.500 4 5 1.500-4.500 2-.5 4.500-3-3.500-4 .5 2-4-2-3 4 .5z" fill="#e879f9"/>`)
          }
        </div>
        <div class="view">${icon(20, 20, svg`<path d="M.5 0v3.500h12V0M.5 6.500h12v8H.5zM.5 20v-3.500h12V20M18.500 0v5M18.500 10v10" stroke="#fff" stroke-width="1.200"/><rect x="17" y="6" width="3" height="3" fill="#fff"/>`)}</div>
        <div class="apps">
          ${apps.map((a) => html`<div class="app ${a.active ? "on" : ""}">${icon(31, 30, a.art, false, "0 0 32 30")}${a.line ? html`<i class="line ${a.multi ? "multi" : ""}"></i>` : nothing}</div>`)}
        </div>
        <div class="tray">
          <i class="sun"></i><fit-text w="37">31°C</fit-text><fit-text class="cond" w="49">Sunny</fit-text>
          ${icon(138, 22, svg`
            <g stroke="#fff" stroke-width="1.300">
              <path d="M.5 14.500L8.500 6.500l8 8"/>
              <path d="M38 20.500l-9-1V4.500l19-3v14M34 13c-.5-4 3-6 6-5M42 5v4h-4M43 10c.5 4-3 6-6 5M35 18v-4h4"/>
              <rect x="59.500" y="6.500" width="17" height="10"/><path d="M78.500 9v5"/>
              <path d="M88.500 8.500h3l4-4v14l-4-4h-3zM98.500 7l7 8M105.500 7l-7 8"/>
              <path d="M121.500 19C122 11 129 4 137 4M125.500 19.500C126 13 131 8 137 8M129.500 19.500c.5-4 3.500-7 7.500-7" stroke="#ddd"/>
            </g>
            <rect x="61" y="8" width="12" height="7" fill="#fff"/><circle cx="134.500" cy="17.500" r="2" fill="#fff"/>
            <circle cx="44" cy="17" r="4.500" fill="#ff9500"/>`)}
          <div class="clock"><fit-text w="61">11:29 AM</fit-text><fit-text w="75">5 Nov 2022</fit-text></div>
          <div class="note">${icon(20, 20, svg`<path d="M.6.600h18.800v16h-6L10 19.500l-3.500-2.900H.6z" stroke="#fff" stroke-width="1.200"/>`)}</div>
          <i class="peek"></i>
        </div>
      </footer>
    `;
  }
}
